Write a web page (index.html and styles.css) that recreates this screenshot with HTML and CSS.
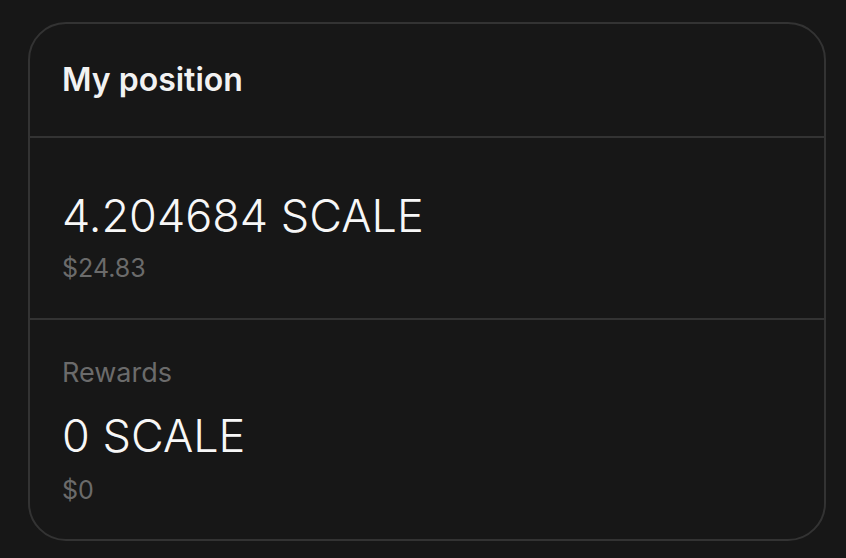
FILE: index.html
```html
<!DOCTYPE html>
<html lang="en">
<head>
<meta charset="utf-8">
<title>My position</title>
<link rel="stylesheet" href="styles.css">
</head>
<body>
  <div class="card">
    <div class="card-header">
      <h2 class="title">My position</h2>
    </div>
    <div class="section section-position">
      <div class="amount">4.204684 SCALE</div>
      <div class="fiat">$24.83</div>
    </div>
    <div class="section section-rewards">
      <div class="label">Rewards</div>
      <div class="amount">0 SCALE</div>
      <div class="fiat">$0</div>
    </div>
  </div>
</body>
</html>
```

FILE: styles.css
```css
* {
  box-sizing: border-box;
}

html,
body {
  margin: 0;
  background: #171717;
}

body {
  padding: 22px 20px 17px 28px;
  font-family: Inter, "Noto Sans", sans-serif;
  color: #f4f4f4;
}

.card {
  height: 519px;
  display: flex;
  flex-direction: column;
  border: 2px solid #333333;
  border-radius: 38px;
  background: #171717;
}

.card-header {
  height: 114px;
  padding: 0 32px;
  display: flex;
  align-items: center;
  border-bottom: 2px solid #333333;
}

.title {
  margin: 0;
  font-size: 32px;
  line-height: 48px;
  font-weight: 600;
  color: #f2f2f2;
}

.section {
  display: flex;
  flex-direction: column;
  padding: 0 32px;
}

.section-position {
  height: 182px;
  padding-top: 50px;
  border-bottom: 2px solid #333333;
}

.section-rewards {
  flex: 1;
  padding-top: 37px;
}

.amount {
  font-size: 45px;
  line-height: 56px;
  font-weight: 300;
  color: #f7f7f7;
}

.fiat {
  margin-top: 8px;
  font-size: 25px;
  line-height: 32px;
  color: #6b6b6b;
}

.label {
  margin-bottom: 19px;
  font-size: 27px;
  line-height: 32px;
  color: #6b6b6b;
}

.section-rewards .fiat {
  margin-top: 10px;
}
```
